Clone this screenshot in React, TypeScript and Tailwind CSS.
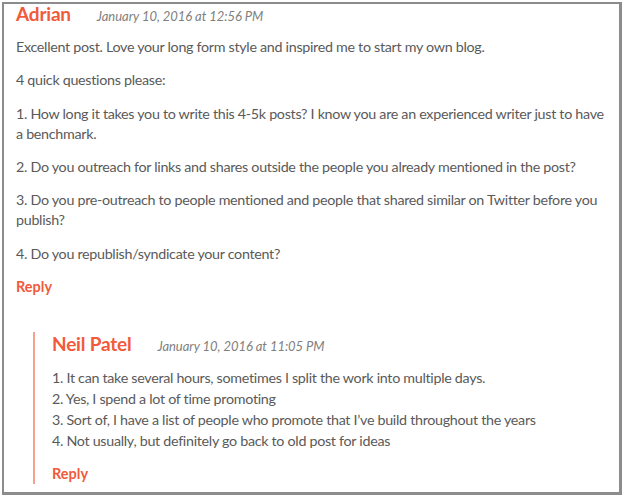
import React from "react";

const font = { fontFamily: "Lato, 'Noto Sans', sans-serif" };

export default function App() {
  return (
    <div className="w-[624px] h-[497px] bg-white p-[2px] overflow-hidden" style={font}>
      <div className="h-[493px] border-l-2 border-t-2 border-r-[3px] border-b-[3px] border-[#8c8c8c] pl-[12px] pr-[10px] pt-0">
        <div className="flex items-baseline h-[20px]">
          <span className="text-[19px] font-bold text-[#f15a3a] leading-[20px] tracking-[-0.2px]">Adrian</span>
          <span className="ml-[26px] text-[13px] italic text-[#808080] leading-[20px] tracking-[-0.05px]">
            January 10, 2016 at 12:56 PM
          </span>
        </div>
        <div className="text-[14.3px] leading-[20px] text-[#5a5a5a] mt-[13px] tracking-[-0.3px]">
          <p className="mb-[13.33px]">Excellent post. Love your long form style and inspired me to start my own blog.</p>
          <p className="mb-[13.33px]">4 quick questions please:</p>
          <p className="mb-[13.33px]">1. How long it takes you to write this 4-5k posts? I know you are an experienced writer just to have a benchmark.</p>
          <p className="mb-[13.33px]">2. Do you outreach for links and shares outside the people you already mentioned in the post?</p>
          <p className="mb-[13.33px]">3. Do you pre-outreach to people mentioned and people that shared similar on Twitter before you publish?</p>
          <p className="mb-[13.33px]">4. Do you republish/syndicate your content?</p>
          <p className="font-bold text-[#f15a3a] tracking-normal text-[14.5px]">Reply</p>
        </div>
        <div className="ml-[17px] mt-[35px] border-l-2 border-[#f7a28e] pl-[17px]">
          <div className="flex items-baseline h-[24px]">
            <span className="text-[19px] font-bold text-[#f15a3a] leading-[24px] tracking-[-0.2px]">Neil Patel</span>
            <span className="ml-[26px] text-[13px] italic text-[#808080] leading-[24px] tracking-[-0.05px]">
              January 10, 2016 at 11:05 PM
            </span>
          </div>
          <div className="text-[14.3px] leading-[21px] text-[#5a5a5a] mt-[11.5px] tracking-[-0.3px]">
            <p>1. It can take several hours, sometimes I split the work into multiple days.</p>
            <p>2. Yes, I spend a lot of time promoting</p>
            <p>3. Sort of, I have a list of people who promote that I’ve build throughout the years</p>
            <p>4. Not usually, but definitely go back to old post for ideas</p>
            <p className="font-bold text-[#f15a3a] mt-[12px] tracking-normal text-[14.5px]">Reply</p>
          </div>
        </div>
      </div>
    </div>
  );
}
